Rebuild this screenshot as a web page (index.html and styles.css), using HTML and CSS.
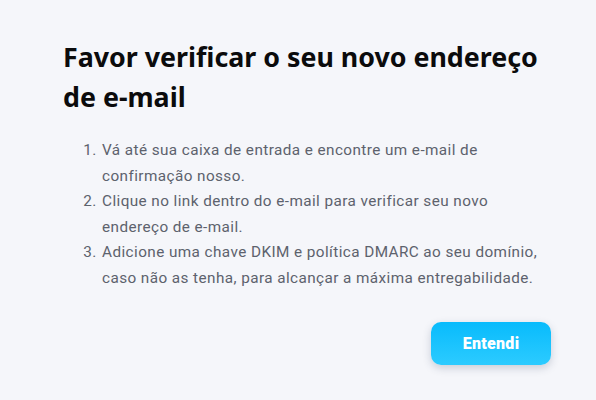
FILE: index.html
```html
<!DOCTYPE html>
<html lang="pt">
<head>
	<meta charset="UTF-8">
	<title>Verificar e-mail</title>
	<link rel="stylesheet" href="styles.css">
</head>
<body>
	<div class="modal">
		<h1 class="title">Favor verificar o seu novo endereço de e-mail</h1>
		<ol class="steps">
			<li>Vá até sua caixa de entrada e encontre um e-mail de confirmação nosso.</li>
			<li>Clique no link dentro do e-mail para verificar seu novo endereço de e-mail.</li>
			<li>Adicione uma chave DKIM e política DMARC ao seu domínio, caso não as tenha, para alcançar a máxima entregabilidade.</li>
		</ol>
		<div class="actions">
			<div class="btn">Entendi</div>
		</div>
	</div>
</body>
</html>
```

FILE: styles.css
```css
*{
	margin: 0;
	padding: 0;
	box-sizing: border-box;
}
body{
	background-color: #f5f6fa;
	font-family: Roboto, "Liberation Sans", sans-serif;
	width: 596px;
	height: 400px;
	overflow: hidden;
}
.modal{
	padding: 37px 45px 0 63px;
}
.title{
	font-family: "Noto Sans", "Open Sans", sans-serif;
	font-weight: 700;
	font-size: 26.8px;
	line-height: 40px;
	color: #0b0b0c;
	max-width: 490px;
}
.steps{
	margin-top: 21px;
	padding-left: 38px;
	color: #5d626d;
	font-size: 15.3px;
	letter-spacing: 0.42px;
	line-height: 25.5px;
	max-width: 488px;
}
.steps li{
	padding-left: 1px;
}
.actions{
	display: flex;
	justify-content: flex-end;
	margin-top: 31px;
}
.btn{
	width: 120px;
	height: 43px;
	border-radius: 10px;
	background: linear-gradient(#08bbfc, #2ccbff);
	box-shadow: 0 3px 8px rgba(40, 60, 90, 0.22);
	color: #fff;
	font-weight: 900;
	font-size: 16px;
	letter-spacing: 0.3px;
	display: flex;
	align-items: center;
	justify-content: center;
}
```
